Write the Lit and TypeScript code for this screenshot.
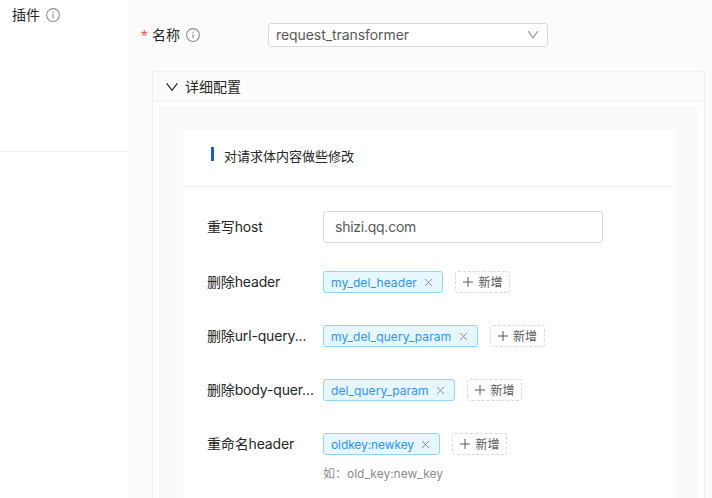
import { LitElement, html, css } from "lit";
import { customElement } from "lit/decorators.js";
import { styleMap } from "lit/directives/style-map.js";

interface TagRow {
  label: string;
  tag: string;
  width: number;
  spacing: number;
  hint?: string;
}

const ROWS: TagRow[] = [
  { label: "删除header", tag: "my_del_header", width: 120.4, spacing: 0.1 },
  { label: "删除url-query...", tag: "my_del_query_param", width: 155, spacing: 0.12 },
  { label: "删除body-quer...", tag: "del_query_param", width: 132.4, spacing: 0.07 },
  { label: "重命名header", tag: "oldkey:newkey", width: 117.4, spacing: -0.1, hint: "old_key:new_key" },
];

const infoIcon = html`<svg class="info" viewBox="0 0 14 14" width="14" height="14" fill="none" stroke="#8c8c8c">
  <circle cx="7" cy="7" r="6.4" stroke-width="1.05" />
  <path d="M7 6.1V10.3" stroke-width="1.1" />
  <circle cx="7" cy="4.2" r=".75" fill="#8c8c8c" stroke="none" />
</svg>`;

@customElement("app-root")
export class AppRoot extends LitElement {
  static styles = css`
    :host {
      display: flex;
      width: 712px;
      height: 498px;
      overflow: hidden;
      background: #fbfbfb;
      color: #262626;
      font: 14px/22px Inter, "Noto Sans CJK SC", sans-serif;
    }
    * { box-sizing: border-box; }
    svg { display: block; flex: none; }
    .side { width: 128px; flex: none; background: #fff; }
    .side-head {
      display: flex;
      gap: 6px;
      height: 152px;
      padding: 4px 0 0 12px;
      border-bottom: 1px solid #f0f0f0;
    }
    .side-head .info { margin-top: 4px; }
    .main { width: 584px; padding: 23px 7px 0 13px; }
    .name { display: flex; align-items: center; height: 24px; }
    .star { width: 11px; color: #ff4d4f; font: 17px/14px "Liberation Sans", sans-serif; padding-top: 4px; }
    .name-label { display: flex; align-items: center; gap: 6px; width: 116px; }
    .select {
      display: flex;
      align-items: center;
      justify-content: space-between;
      width: 280px;
      height: 24px;
      padding: 0 8px 0 7px;
      background: #fff;
      border: 1px solid #d9d9d9;
      border-radius: 3px;
      color: #595959;
      letter-spacing: -0.07px;
    }
    .panel {
      margin: 24px 0 0 11px;
      width: 553px;
      height: 450px;
      border: 1px solid #f0f0f0;
      border-radius: 3px;
      background: #fff;
    }
    .panel-head {
      display: flex;
      align-items: center;
      gap: 7px;
      height: 30px;
      padding-left: 13px;
      background: #fbfbfb;
      border-bottom: 1px solid #f0f0f0;
    }
    .well { margin: 4px 6px 0; padding: 24px 24px 0; height: 420px; background: #fafafa; }
    .card { width: 491px; height: 400px; background: #fff; }
    .card-head {
      display: flex;
      gap: 10px;
      height: 57px;
      padding: 15px 0 0 28px;
      border-bottom: 1px solid #f0f0f0;
      font-size: 13px;
    }
    .bar { width: 3px; height: 14px; margin-top: 2px; background: #1759dd; }
    .form { padding: 24px 0 0 24px; }
    .row { display: flex; align-items: center; height: 22px; margin-bottom: 32px; }
    .row.host { height: 32px; margin-bottom: 28px; }
    .label { width: 116px; white-space: nowrap; letter-spacing: -0.15px; }
    .input {
      width: 280px;
      height: 32px;
      padding: 4px 11px;
      border: 1px solid #d9d9d9;
      border-radius: 3px;
      color: #595959;
      letter-spacing: -0.25px;
    }
    .tag {
      display: flex;
      align-items: center;
      justify-content: space-between;
      height: 22px;
      padding: 0 9px 0 7px;
      background: #e6f7ff;
      border: 1px solid #91d5ff;
      border-radius: 3px;
      color: #2b93ff;
      font-size: 12px;
    }
    .add {
      display: flex;
      align-items: center;
      gap: 5px;
      width: 55.4px;
      height: 22px;
      margin-left: 11.5px;
      padding-left: 7.5px;
      border: 1px dashed #d9d9d9;
      border-radius: 3px;
      color: #595959;
      font-size: 12px;
    }
    .add span, .tag span { padding-top: 2px; }
    .hint { margin: -24px 0 0 116px; color: #8c8c8c; font-size: 12px; }
  `;

  private row(r: TagRow) {
    return html`
      <div class="row">
        <div class="label">${r.label}</div>
        <div class="tag" style=${styleMap({ width: `${r.width}px`, letterSpacing: `${r.spacing}px` })}>
          <span>${r.tag}</span>
          <svg width="9" height="9" viewBox="0 0 9 9" stroke="#8c8c8c"><path d="M1.2 1L7.8 8M7.8 1L1.2 8" /></svg>
        </div>
        <div class="add">
          <svg width="10" height="10" viewBox="0 0 10 10" stroke="#595959"><path d="M5 0V10M0 5H10" /></svg>
          <span>新增</span>
        </div>
      </div>
      ${r.hint ? html`<div class="hint">如：${r.hint}</div>` : null}
    `;
  }

  render() {
    return html`
      <div class="side"><div class="side-head"><span>插件</span>${infoIcon}</div></div>
      <div class="main">
        <div class="name">
          <span class="star">*</span>
          <div class="name-label"><span>名称</span>${infoIcon}</div>
          <div class="select">
            <span>request_transformer</span>
            <svg width="12" height="10" viewBox="0 0 12 10" fill="none" stroke="#8c8c8c" stroke-width="1.1"><path d="M1.2 1.2L6 7.8L10.8 1.2" /></svg>
          </div>
        </div>
        <div class="panel">
          <div class="panel-head">
            <svg width="12" height="10" viewBox="0 0 12 10" fill="none" stroke="#262626" stroke-width="1.25"><path d="M.7 1.3L6 8.3L11.3 1.3" /></svg>
            <span>详细配置</span>
          </div>
          <div class="well">
            <div class="card">
              <div class="card-head"><i class="bar"></i><span>对请求体内容做些修改</span></div>
              <div class="form">
                <div class="row host"><div class="label">重写host</div><div class="input">shizi.qq.com</div></div>
                ${ROWS.map((r) => this.row(r))}
              </div>
            </div>
          </div>
        </div>
      </div>
    `;
  }
}
